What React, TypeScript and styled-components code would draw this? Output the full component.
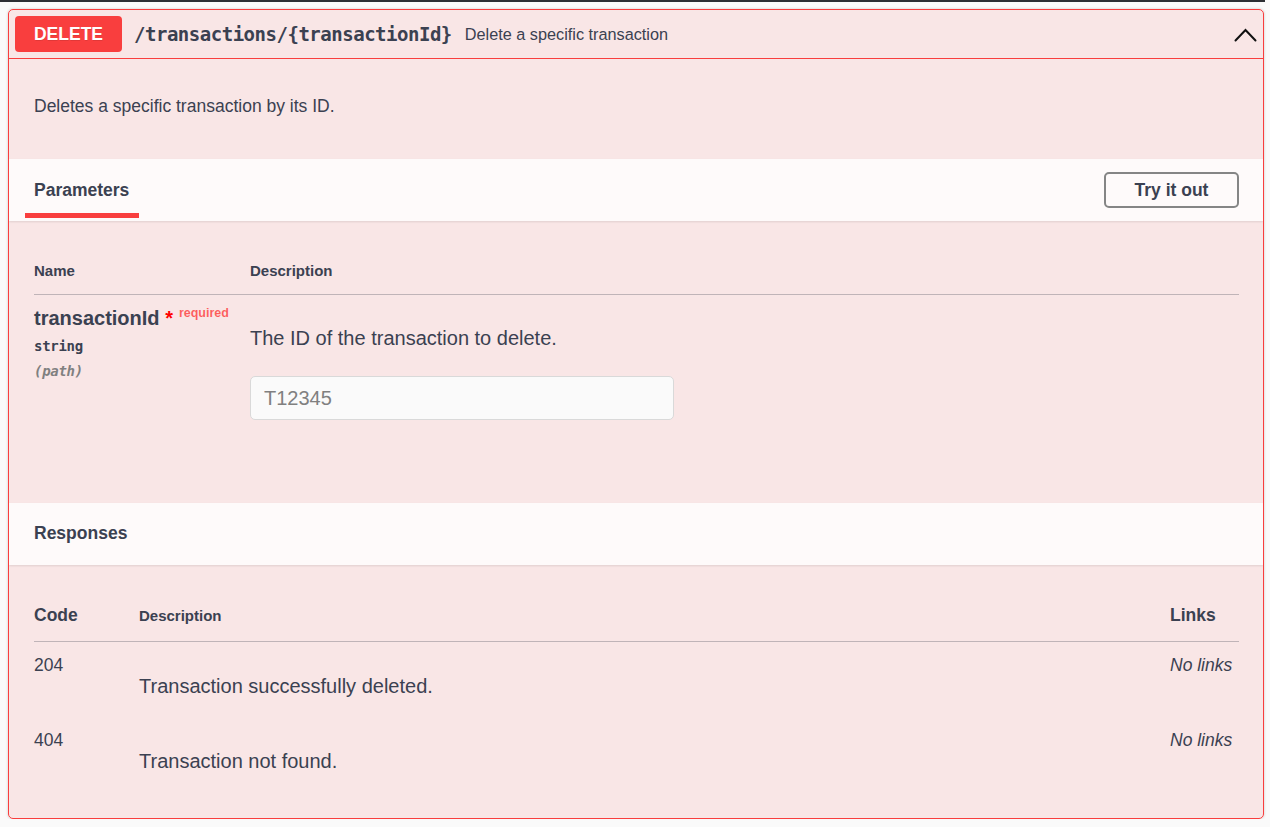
import React from "react";
import styled, { createGlobalStyle } from "styled-components";

const GlobalStyle = createGlobalStyle`
  *, *::before, *::after { box-sizing: border-box; }
  html, body { margin: 0; padding: 0; background: #fafafa; }
  body {
    font-family: "Liberation Sans", Arial, sans-serif;
    color: #3b4151;
  }
`;

const SANS = `"Liberation Sans", Arial, sans-serif`;
const MONO = `"DejaVu Sans Mono", "Liberation Mono", monospace`;
const RED = "#f93e3e";
const TEXT = "#3b4151";

const TopBar = styled.div`
  height: 2px;
  margin-right: 5px;
  background: #2d2f34;
`;

const Page = styled.div`
  padding: 7px 6px 0 8px;
`;

const Block = styled.section`
  border: 1px solid ${RED};
  border-radius: 5px;
  background: rgba(249, 62, 62, 0.1);
  box-shadow: 0 0 3px rgba(0, 0, 0, 0.19);
  overflow: hidden;
`;

const Summary = styled.div`
  display: flex;
  align-items: center;
  padding: 6px;
  border-bottom: 1px solid ${RED};
`;

const Method = styled.span`
  display: flex;
  align-items: center;
  justify-content: center;
  width: 107px;
  height: 36px;
  border-radius: 4px;
  background: ${RED};
  color: #fff;
  font-family: ${SANS};
  font-weight: 700;
  font-size: 17.5px;
  text-shadow: 0 1px 0 rgba(0, 0, 0, 0.1);
`;

const Path = styled.span`
  padding: 0 13px 0 12px;
  font-family: ${MONO};
  font-weight: 700;
  font-size: 19px;
  letter-spacing: -0.48px;
  color: ${TEXT};
`;

const SummaryDesc = styled.span`
  flex: 1;
  font-size: 16.25px;
  color: ${TEXT};
`;

const Chevron = styled.svg`
  display: block;
  margin-top: 1px;
  flex: none;
`;

const DescWrap = styled.div`
  padding: 37px 25px 43px;
`;

const Para = styled.p<{ $size: number; $top: number }>`
  margin: ${(p) => p.$top}px 0 0;
  font-size: ${(p) => p.$size}px;
  line-height: ${(p) => (p.$size >= 20 ? 23 : 20)}px;
  color: ${TEXT};
`;

const SectionHeader = styled.div<{ $tabbed?: boolean }>`
  display: flex;
  align-items: center;
  justify-content: space-between;
  height: 62px;
  padding: 0 24px 0 ${(p) => (p.$tabbed ? 16 : 25)}px;
  background: rgba(255, 255, 255, 0.8);
  box-shadow: 0 1px 2px rgba(0, 0, 0, 0.1);
`;

const Tab = styled.div`
  align-self: flex-end;
  margin-bottom: 3px;
  padding: 0 10px 13px 9px;
  border-bottom: 5px solid ${RED};
  font-weight: 700;
  font-size: 17.5px;
  line-height: 20px;
`;

const SectionTitle = styled.h4`
  margin: 0 0 3px;
  font-weight: 700;
  font-size: 17.5px;
  line-height: 20px;
`;

const TryButton = styled.button`
  width: 135px;
  height: 36px;
  padding: 0;
  border: 2px solid #858585;
  border-radius: 5px;
  background: transparent;
  font-family: ${SANS};
  font-weight: 700;
  font-size: 17.5px;
  color: ${TEXT};
`;

const SectionBody = styled.div<{ $bottom: number }>`
  padding: 40px 24px ${(p) => p.$bottom}px 25px;
`;

const HeadRow = styled.div<{ $cols: string; $gap: number }>`
  display: grid;
  grid-template-columns: ${(p) => p.$cols};
  align-items: baseline;
  padding-bottom: ${(p) => p.$gap}px;
  border-bottom: 1px solid rgba(59, 65, 81, 0.3);
`;

const HeadCell = styled.div<{ $size: number }>`
  font-weight: 700;
  font-size: ${(p) => p.$size}px;
  line-height: 20px;
`;

const ParamRow = styled.div`
  display: grid;
  grid-template-columns: 216px 1fr;
  padding-top: 12px;
`;

const ParamName = styled.div`
  font-weight: 700;
  font-size: 20px;
  line-height: 23px;
`;

const Star = styled.span`
  color: red;
`;

const Required = styled.span`
  padding-left: 6px;
  font-size: 12.5px;
  line-height: 1;
  vertical-align: 8px;
  color: rgba(255, 0, 0, 0.6);
`;

const ParamType = styled.div<{ $in?: boolean }>`
  padding-top: ${(p) => (p.$in ? 5 : 6)}px;
  font-family: ${MONO};
  font-weight: 700;
  font-size: 14px;
  line-height: 20px;
  letter-spacing: -0.3px;
  font-style: ${(p) => (p.$in ? "italic" : "normal")};
  color: ${(p) => (p.$in ? "#808080" : TEXT)};
`;

const ValueInput = styled.input`
  display: block;
  margin-top: 26px;
  width: 424px;
  height: 44px;
  padding: 0 13px;
  border: 1px solid #d9d9d9;
  border-radius: 5px;
  background: #fafafa;
  font-family: ${SANS};
  font-size: 20px;
  color: ${TEXT};
  outline: none;
  &::placeholder {
    color: #808080;
  }
`;

const RespRow = styled.div`
  display: grid;
  grid-template-columns: 105px 1fr 69px;
  padding: 13px 0 19px;
`;

const Cell = styled.div<{ $italic?: boolean }>`
  font-size: 17.5px;
  line-height: 20px;
  font-style: ${(p) => (p.$italic ? "italic" : "normal")};
`;

const responses = [
  { code: "204", desc: "Transaction successfully deleted." },
  { code: "404", desc: "Transaction not found." },
];

export default function App() {
  return (
    <>
      <GlobalStyle />
      <TopBar />
      <Page>
        <Block>
          <Summary>
            <Method>DELETE</Method>
            <Path>/transactions/{"{transactionId}"}</Path>
            <SummaryDesc>Delete a specific transaction</SummaryDesc>
            <Chevron width="23" height="14" viewBox="0 0 23 14">
              <polyline
                points="1.5,12.5 11.5,2 21.5,12.5"
                fill="none"
                stroke="#111"
                strokeWidth="2"
                strokeLinecap="round"
                strokeLinejoin="miter"
              />
            </Chevron>
          </Summary>

          <DescWrap>
            <Para $size={17.5} $top={0}>
              Deletes a specific transaction by its ID.
            </Para>
          </DescWrap>

          <SectionHeader $tabbed>
            <Tab>Parameters</Tab>
            <TryButton type="button">Try it out</TryButton>
          </SectionHeader>

          <SectionBody $bottom={83}>
            <HeadRow $cols="216px 1fr" $gap={13}>
              <HeadCell $size={15}>Name</HeadCell>
              <HeadCell $size={15}>Description</HeadCell>
            </HeadRow>
            <ParamRow>
              <div>
                <ParamName>
                  transactionId<Star>{"\u00a0*"}</Star>
                  <Required>required</Required>
                </ParamName>
                <ParamType>string</ParamType>
                <ParamType $in>(path)</ParamType>
              </div>
              <div>
                <Para $size={20} $top={20}>
                  The ID of the transaction to delete.
                </Para>
                <ValueInput type="text" placeholder="T12345" />
              </div>
            </ParamRow>
          </SectionBody>

          <SectionHeader>
            <SectionTitle>Responses</SectionTitle>
          </SectionHeader>

          <SectionBody $bottom={26}>
            <HeadRow $cols="105px 1fr 69px" $gap={15}>
              <HeadCell $size={17.5}>Code</HeadCell>
              <HeadCell $size={15}>Description</HeadCell>
              <HeadCell $size={17.5}>Links</HeadCell>
            </HeadRow>
            {responses.map((r) => (
              <RespRow key={r.code}>
                <Cell>{r.code}</Cell>
                <div>
                  <Para $size={20} $top={20}>
                    {r.desc}
                  </Para>
                </div>
                <Cell $italic>No links</Cell>
              </RespRow>
            ))}
          </SectionBody>
        </Block>
      </Page>
    </>
  );
}
